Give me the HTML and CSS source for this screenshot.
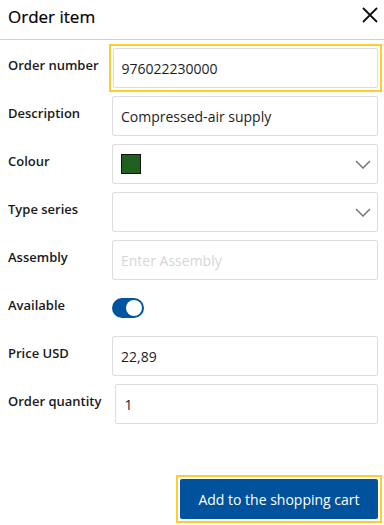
FILE: index.html
```html
<!DOCTYPE html>
<html>
	<head>
		<title>Order item</title>
		<meta name="viewport" content="width=device-width, initial-scale=1.0">
		<link rel="stylesheet" href="styles.css">
	</head>
	<body>
		<div class="dialog">
			<div class="header">
				<span class="title">Order item</span>
				<svg class="close" width="16" height="16" viewBox="0 0 16 16">
					<path d="M1 1 L15 15 M15 1 L1 15" stroke="#111" stroke-width="1.8" fill="none"/>
				</svg>
			</div>
			<div class="form">
				<div class="row">
					<label>Order number</label>
					<div class="ring grow"><div class="field">976022230000</div></div>
				</div>
				<div class="row">
					<label>Description</label>
					<div class="field">Compressed-air supply</div>
				</div>
				<div class="row">
					<label>Colour</label>
					<div class="field select">
						<span class="swatch"></span>
						<svg class="chevron" width="16" height="9" viewBox="0 0 16 9">
							<path d="M1 1 L8 8 L15 1" stroke="#777" stroke-width="1.5" fill="none"/>
						</svg>
					</div>
				</div>
				<div class="row">
					<label>Type series</label>
					<div class="field select">
						<span></span>
						<svg class="chevron" width="16" height="9" viewBox="0 0 16 9">
							<path d="M1 1 L8 8 L15 1" stroke="#777" stroke-width="1.5" fill="none"/>
						</svg>
					</div>
				</div>
				<div class="row">
					<label>Assembly</label>
					<div class="field placeholder">Enter Assembly</div>
				</div>
				<div class="row">
					<label>Available</label>
					<div class="toggle-wrap"><span class="toggle"><span class="knob"></span></span></div>
				</div>
				<div class="row">
					<label>Price USD</label>
					<div class="field">22,89</div>
				</div>
				<div class="row">
					<label>Order quantity</label>
					<div class="field">1</div>
				</div>
			</div>
			<div class="footer">
				<div class="ring"><button class="primary">Add to the shopping cart</button></div>
			</div>
		</div>
	</body>
</html>
```

FILE: styles.css
```css
body {
	font-family: 'Open Sans', 'Noto Sans', sans-serif;
	margin: 0px;
	background: #ffffff;
	color: #1a1a1a;
}
.dialog {
	display: flex;
	flex-direction: column;
	min-height: 100vh;
}
.header {
	height: 39px;
	border-bottom: 1px solid #d0d0d8;
	display: flex;
	align-items: center;
	justify-content: space-between;
	padding: 0px 6px 0px 8px;
}
.title {
	font-size: 17px;
	font-weight: 500;
	color: #000000;
	margin-top: -6px;
	-webkit-text-stroke: 0.2px #000000;
}
.close {
	margin-top: -9px;
}

.form {
	padding: 8px 6px 0px 8px;
	display: flex;
	flex-direction: column;
	gap: 8px;
}
.row {
	display: flex;
	align-items: flex-start;
	gap: 14px;
}
label {
	min-width: 90px;
	font-size: 13px;
	font-weight: 600;
	line-height: 18px;
	padding-top: 8px;
	white-space: nowrap;
}
.field {
	flex: 1;
	height: 38px;
	border: 1px solid #dddddd;
	border-radius: 2px;
	display: flex;
	align-items: center;
	padding: 0px 9px 0px 8px;
	font-size: 14px;
	color: #1c1c28;
}
.ring {
	border: 2px solid #ffcc33;
	padding: 2px;
	margin: -4px;
	display: flex;
}
.grow {
	flex: 1;
}
.placeholder {
	color: #d6d6d6;
}
.select {
	justify-content: space-between;
	padding-right: 6px;
}
.swatch {
	width: 18px;
	height: 18px;
	background: #1f5f1f;
	border: 1px solid #111111;
}
.toggle-wrap {
	height: 40px;
	display: flex;
	align-items: center;
}
.toggle {
	width: 32px;
	height: 20px;
	border-radius: 10px;
	background: #0054a0;
	display: flex;
	align-items: center;
	justify-content: flex-end;
	padding: 0px 2px;
	box-sizing: border-box;
}
.knob {
	width: 16px;
	height: 16px;
	border-radius: 50%;
	background: #ffffff;
}

.footer {
	margin-top: auto;
	display: flex;
	justify-content: flex-end;
	padding: 0px 6px 6px 0px;
}
.primary {
	width: 198px;
	height: 40px;
	border: none;
	border-radius: 2px;
	background: #00529c;
	color: #ffffff;
	font-family: 'Open Sans', 'Noto Sans', sans-serif;
	font-size: 14px;
}
```
